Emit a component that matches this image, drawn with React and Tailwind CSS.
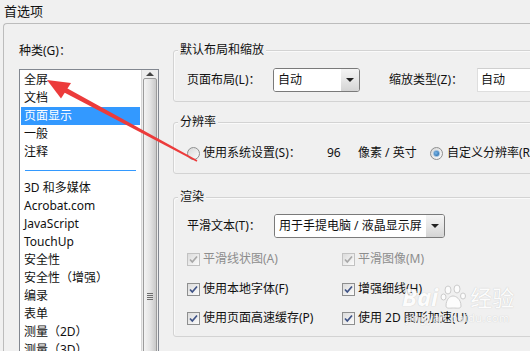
const categories = ["全屏", "文档", "页面显示", "一般", "注释", null, "3D 和多媒体", "Acrobat.com", "JavaScript", "TouchUp", "安全性", "安全性（增强）", "编录", "表单", "测量（2D）", "测量（3D）"];

export default function App() {
  return (
    <div className="relative h-[351px] w-[530px] overflow-hidden bg-[#f0f0f0] font-['Noto_Sans','Noto_Sans_CJK_SC',sans-serif] text-[12px] text-[#111]">
      <div className="h-[23px] pl-[4px] pt-[3px] leading-[16px] text-[13px]">首选项</div>
      <div className="ml-[3px] flex h-[328px] rounded-tl-[4px] border-l border-t border-[#bcbcbc]">
        <div className="w-[169px] shrink-0 pl-[15px] pt-[20px]">
          <div className="leading-[14px]">种类(G)：</div>
          <div className="mt-[11px] flex h-[300px] w-[140px] border border-[#828790] bg-white">
            <div className="w-[121px] px-[1px] pt-[1px]">
              {categories.map((name, i) =>
                name === null ? (
                  <div key={i} className="flex h-[18px] items-center pl-[4px] pr-[3px]">
                    <div className="h-[1px] w-[111px] bg-[#3399ff]" />
                  </div>
                ) : (
                  <div
                    key={i}
                    className={`h-[18px] whitespace-nowrap pl-[3px] leading-[18px] ${
                      name === "页面显示" ? "bg-[#3399ff] text-white" : ""
                    }`}
                  >
                    {name}
                  </div>
                )
              )}
            </div>
            <ScrollBar />
          </div>
        </div>

        <div className="flex-1 pt-[26px]">
          <Group title="默认布局和缩放" className="h-[52px] pt-[17px]">
            <div className="flex items-center">
              <div className="w-[86px] leading-[18px]">页面布局(L)：</div>
              <Select value="自动" width="w-[87px]" />
              <div className="ml-[29px] w-[88px] leading-[18px]">缩放类型(Z)：</div>
              <div className="h-[24px] w-[80px] border border-[#dedede] border-t-[#cfcfcf] bg-white pl-[3px] leading-[22px]">自动</div>
            </div>
          </Group>

          <Group title="分辨率" className="mt-[20px] h-[52px] pt-[21px]">
            <div className="flex h-[18px] items-center leading-[18px]">
              <Radio />
              <span className="ml-[3px] w-[124px]">使用系统设置(S)：</span>
              <span className="w-[31px]">96</span>
              <span className="w-[72px]">像素 / 英寸</span>
              <Radio checked />
              <span className="ml-[4px] whitespace-nowrap">自定义分辨率(R)</span>
            </div>
          </Group>

          <Group title="渲染" className="mt-[23px] h-[140px] pt-[16px]">
            <div className="flex items-center">
              <div className="w-[87px] leading-[18px]">平滑文本(T)：</div>
              <Select value="用于手提电脑 / 液晶显示屏" width="w-[171px]" />
            </div>
            <div className="mt-[12px] flex">
              <Check label="平滑线状图(A)" disabled />
              <Check label="平滑图像(M)" disabled />
            </div>
            <div className="mt-[12px] flex">
              <Check label="使用本地字体(F)" />
              <Check label="增强细线(H)" />
            </div>
            <div className="mt-[11px] flex">
              <Check label="使用页面高速缓存(P)" />
              <Check label="使用 2D 图形加速(U)" />
            </div>
          </Group>
        </div>
      </div>

      <div className="pointer-events-none absolute left-[402px] top-[283px] text-white opacity-80 [text-shadow:0_0_1px_#b4b4b4]">
        <div className="flex items-center">
          <span className="text-[24px] font-bold leading-[28px] italic">Bai</span>
          <svg width="28" height="26" viewBox="0 0 28 26" className="mx-[2px]">
            <g fill="#fff" stroke="#c4c4c4" strokeWidth="1">
              <ellipse cx="8" cy="6" rx="3" ry="4" />
              <ellipse cx="17" cy="5" rx="3" ry="4" />
              <ellipse cx="3.5" cy="13" rx="2.5" ry="3" />
              <ellipse cx="23" cy="12" rx="2.5" ry="3" />
              <path d="M6 22 C6 15 10 12 13 12 C16 12 21 15 21 22 C21 25 17 24 13.5 24 C10 24 6 25 6 22 Z" />
            </g>
          </svg>
          <span className="text-[22px] leading-[28px]">经验</span>
        </div>
        <div className="ml-[4px] text-[11px] leading-[14px] tracking-[0.5px]">jingyan.baidu.com</div>
      </div>

      <svg className="pointer-events-none absolute left-0 top-0" width="530" height="351">
        <polygon points="66.2,87.8 197.4,160.3 196.6,161.7 63.8,92.2" fill="#ec3b3b" />
        <polygon points="47,80 71,83 61,98.5" fill="#ec3b3b" />
      </svg>
    </div>
  );
}

function Group({ title, className, children }) {
  return (
    <div className={`relative w-[400px] rounded-[3px] border border-[#d3d3d3] pl-[13px] shadow-[inset_1px_1px_0_#fafafa] ${className}`}>
      <span className="absolute left-[4px] top-[-8px] bg-[#f0f0f0] px-[2px] leading-[14px]">{title}</span>
      {children}
    </div>
  );
}

function Select({ value, width }) {
  return (
    <div className={`flex h-[24px] ${width} overflow-hidden rounded-[3px] border border-[#7a7a7a] bg-white`}>
      <div className="flex-1 whitespace-nowrap border border-white pl-[3px] leading-[20px]">{value}</div>
      <div className="flex w-[18px] items-center justify-center bg-gradient-to-b from-[#f4f4f4] via-[#e6e6e6] to-[#d4d4d4]">
        <div className="h-0 w-0 border-x-[4px] border-t-[4px] border-x-transparent border-t-[#222]" />
      </div>
    </div>
  );
}

function Radio({ checked = false }) {
  return (
    <div className="flex h-[13px] w-[13px] shrink-0 items-center justify-center rounded-full border border-[#8e8f8f] bg-gradient-to-br from-[#d8d8d8] to-[#fbfbfb]">
      {checked ? (
        <div className="h-[7px] w-[7px] rounded-full border border-[#8fb8dd] bg-[radial-gradient(circle_at_40%_40%,#7bb7ea,#1a5f9e)]" />
      ) : null}
    </div>
  );
}

function Check({ label, disabled = false }) {
  return (
    <div className="flex h-[18px] w-[155px] items-center leading-[18px]">
      <div
        className={`flex h-[13px] w-[13px] shrink-0 items-center justify-center border bg-gradient-to-br from-[#dcdcdc] to-[#fbfbfb] ${
          disabled ? "border-[#c2c2c2]" : "border-[#8e8f8f]"
        }`}
      >
        <svg width="11" height="11" viewBox="0 0 11 11">
          <path
            d="M2 5.5 L4.3 8 L9 2.5"
            fill="none"
            stroke={disabled ? "#a8a8a8" : "#3f5386"}
            strokeWidth="1.7"
          />
        </svg>
      </div>
      <span className={`ml-[3px] whitespace-nowrap ${disabled ? "text-[#8d8d8d]" : ""}`}>{label}</span>
    </div>
  );
}

function ScrollBar() {
  return (
    <div className="flex w-[17px] flex-col border-l border-[#d6d6d6] bg-[#ededed]">
      <div className="flex h-[18px] items-center justify-center">
        <div className="h-0 w-0 border-x-[4px] border-b-[4px] border-x-transparent border-b-[#444]" />
      </div>
      <div className="ml-[1px] mt-[1px] flex h-[400px] w-[14px] flex-col items-center rounded-t-[2px] border border-[#9b9b9b] bg-gradient-to-r from-[#f3f3f3] via-[#e4e4e4] to-[#c9c9c9] pt-[214px]">
        <div className="h-[1px] w-[6px] bg-[#6d6d6d]" />
        <div className="mt-[1px] h-[1px] w-[6px] bg-[#6d6d6d]" />
        <div className="mt-[1px] h-[1px] w-[6px] bg-[#6d6d6d]" />
        <div className="mt-[1px] h-[1px] w-[6px] bg-[#6d6d6d]" />
      </div>
    </div>
  );
}
